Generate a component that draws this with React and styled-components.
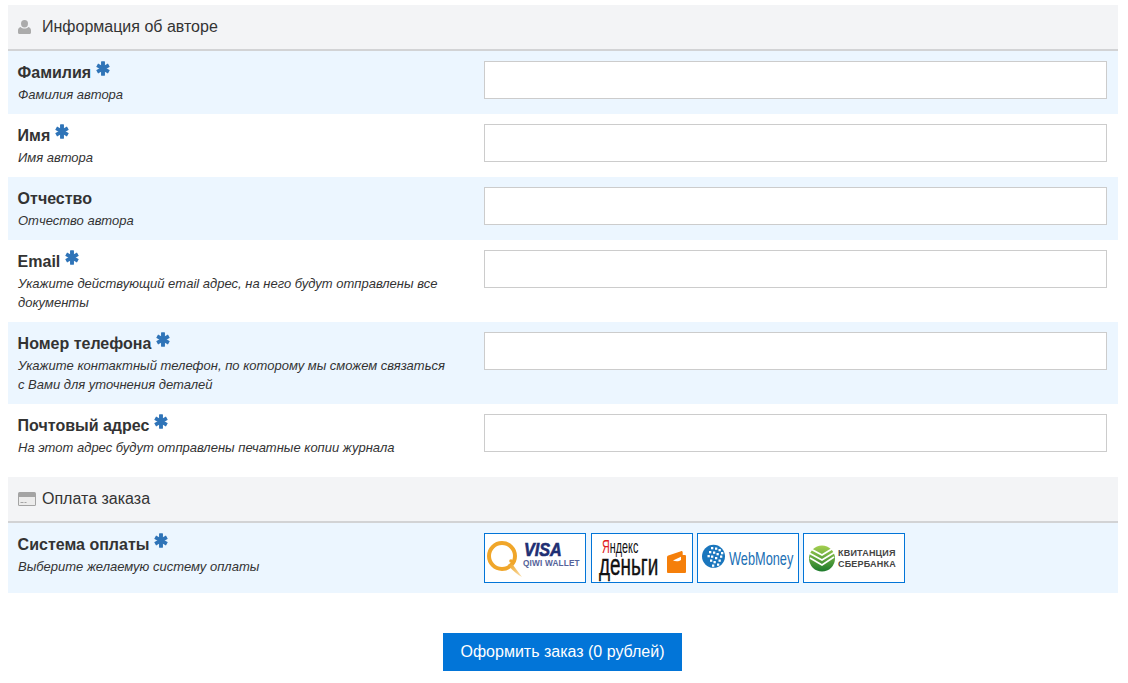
import React from 'react';
import styled, { createGlobalStyle } from 'styled-components';

const GlobalStyle = createGlobalStyle`
  html, body {
    margin: 0;
    padding: 0;
    background: #fff;
    font-family: "Liberation Sans", Arial, sans-serif;
    color: #333;
  }
`;

const Page = styled.form`
  padding: 5px 10px 12px 8px;
  display: flex;
  flex-direction: column;
`;

const SectionHeader = styled.div`
  display: flex;
  align-items: center;
  gap: ${(p) => p.$gap}px;
  height: 44px;
  padding: 0 10px;
  background: #f3f4f6;
  border-bottom: 2px solid #d2d3d5;
  font-size: 16px;
  color: #333;
  margin-top: ${(p) => p.$top || 0}px;
`;

const Row = styled.div`
  display: grid;
  grid-template-columns: 466px 1fr;
  padding: 10px;
  align-items: start;
  background: ${(p) => (p.$tinted ? '#ecf6ff' : '#fff')};
`;

const LabelCol = styled.div`
  display: flex;
  flex-direction: column;
`;

const Label = styled.label`
  display: flex;
  align-items: flex-start;
  gap: 5px;
  height: 22px;
  line-height: 22px;
  font-size: 16px;
  font-weight: 700;
  color: #333;
  margin: 1px 0 1px -0.4px;
`;

const Hint = styled.div`
  max-width: 432px;
  font-size: 13px;
  line-height: 19px;
  font-style: italic;
  color: #333;
`;

const Input = styled.input`
  display: block;
  box-sizing: border-box;
  width: 623px;
  height: 38px;
  margin: 0;
  border: 1px solid #ccc;
  background: #fff;
`;

const Star = styled.svg`
  width: 14px;
  height: 15px;
  margin-top: -1px;
  fill: #2f74b8;
`;

const HeaderIcon = styled.svg`
  display: block;
  flex: none;
  margin-left: -0.5px;
  fill: #ababab;
`;

const Systems = styled.div`
  display: flex;
  gap: 4px;
  & > button:first-child {
    margin-right: 1px;
  }
`;

const SystemButton = styled.button`
  box-sizing: border-box;
  width: 102px;
  height: 50px;
  padding: 0;
  border: 1px solid #0275d8;
  background: #fff;
  cursor: pointer;
  & > svg {
    display: block;
    width: 100px;
    height: 48px;
  }
`;

const Actions = styled.div`
  display: flex;
  justify-content: center;
  margin-top: 40px;
  padding-right: 2px;
`;

const Submit = styled.button`
  width: 239px;
  height: 38px;
  border: 0;
  padding: 0 0 0 1px;
  background: #0275d8;
  color: #fff;
  font-family: inherit;
  font-size: 16px;
  cursor: pointer;
`;

// logo lettering, squeezed sideways to the width of the wordmark
const LogoText = ({ x, y, sx = 1, children, ...rest }) => (
  <text transform={`translate(${x} ${y}) scale(${sx} 1)`} fontFamily="Liberation Sans" {...rest}>
    {children}
  </text>
);

const Required = () => (
  <Star viewBox="0 0 14 15" aria-hidden="true">
    <rect x="5.050" y="0.300" width="3.900" height="14.400" rx="0.400" />
    <rect x="5.050" y="0.750" width="3.900" height="13.500" rx="0.400" transform="rotate(60 7 7.500)" />
    <rect x="5.050" y="0.750" width="3.900" height="13.500" rx="0.400" transform="rotate(-60 7 7.500)" />
  </Star>
);

const UserIcon = () => (
  <HeaderIcon width="13" height="14" viewBox="0 0 13 14" aria-hidden="true">
    <ellipse cx="6.500" cy="3.700" rx="3.500" ry="3.700" />
    <path d="M1.200 14C.5 14 0 13.500 0 12.800V10.500C0 8.600 1 7.300 2.600 7c1 1 2.400 1.500 3.900 1.500S9.400 8 10.400 7c1.600.3 2.600 1.600 2.600 3.500v2.300c0 .7-.5 1.200-1.200 1.200z" />
  </HeaderIcon>
);

const CardIcon = () => (
  <HeaderIcon width="18" height="14" viewBox="0 0 18 14" aria-hidden="true">
    <rect x="0" y="0" width="18" height="14" rx="1.500" fill="#a4a4a4" />
    <rect x="1" y="5" width="16" height="8" fill="#ececec" />
    <rect x="2.500" y="10" width="3" height="1" fill="#a4a4a4" />
    <rect x="6.500" y="10" width="2" height="1" fill="#a4a4a4" />
  </HeaderIcon>
);

const QiwiLogo = () => (
  <svg viewBox="0 0 100 48" aria-hidden="true">
    <defs>
      <linearGradient id="qiwiTail" x1="0" y1="0" x2="1" y2="1">
        <stop offset="0" stopColor="#efa21f" />
        <stop offset="1" stopColor="#f9e0b0" />
      </linearGradient>
    </defs>
    <circle cx="17" cy="22" r="13" fill="none" stroke="#f0a62a" strokeWidth="4" />
    <path d="M23 31c2-2 3-2 5 0 3 4 6 8 9 12-4-2-9-6-14-12z" fill="url(#qiwiTail)" />
    <circle cx="26" cy="27" r="1.800" fill="#f0a62a" />
    <LogoText x={39} y={21.700} sx={0.900} fontSize="18" fontWeight="700" fontStyle="italic" stroke="#1f2f73" strokeWidth="0.600" fill="#1f2f73">VISA</LogoText>
    <LogoText x={38} y={32} sx={0.860} fontSize="9.600" fontWeight="700" letterSpacing="0.200" fill="#56639a">QIWI WALLET</LogoText>
  </svg>
);

const YandexLogo = () => (
  <svg viewBox="0 0 100 48" aria-hidden="true">
    <LogoText x={10} y={19} sx={0.600} fontSize="18" fill="#111">
      <tspan fill="#e02020">Я</tspan>ндекс
    </LogoText>
    <LogoText x={7} y={41} sx={0.630} fontSize="30" fill="#111" stroke="#111" strokeWidth="0.400">деньги</LogoText>
    <path d="M75 23.500c0-1 .5-1.600 1.300-2L89 17.200c1-.3 1.700.3 1.700 1.300V21h2c.8 0 1.300.5 1.300 1.300v15.400c0 .8-.5 1.300-1.300 1.300H76.300c-.8 0-1.300-.5-1.300-1.300z" fill="#f57f0a" />
    <path d="M81 26.500l8-3.800v3.300c-2 1.500-5 1.800-8 .5z" fill="#fff" />
  </svg>
);

const webMoneyDots = [
  [13, 13], [17, 13.500], [20.500, 15], [23, 18],
  [11, 17], [15, 17.500], [18.500, 19], [22, 21.500],
  [9.500, 21], [13, 21.500], [17, 23], [20.500, 25.500],
  [12, 25.500], [15.500, 27], [19, 29.500], [14, 30.500],
];

const WebMoneyLogo = () => (
  <svg viewBox="0 0 100 48" aria-hidden="true">
    <circle cx="15.500" cy="22.300" r="11.500" fill="#1a76bd" />
    <g fill="#fff">
      {webMoneyDots.map(([x, y]) => (
        <rect key={`${x}-${y}`} x={x} y={y} width="2.300" height="2.300" />
      ))}
    </g>
    <LogoText x={31} y={31} sx={0.710} fontSize="18" fill="#1a6fb5">WebMoney</LogoText>
  </svg>
);

const SberLogo = () => (
  <svg viewBox="0 0 100 48" aria-hidden="true">
    <defs>
      <linearGradient id="sber" x1="0" y1="0" x2="0" y2="1">
        <stop offset="0" stopColor="#a6d050" />
        <stop offset="1" stopColor="#1c7a2c" />
      </linearGradient>
    </defs>
    <circle cx="18" cy="24.500" r="13" fill="url(#sber)" />
    <path d="M5 14l13 7 13-8M5 19l13 7 13-8M6 24l12 7 12-8" fill="none" stroke="#fff" strokeWidth="1.700" />
    <LogoText x={34} y={21.700} fontSize="9" fontWeight="700" letterSpacing="0.200" fill="#444">КВИТАНЦИЯ</LogoText>
    <LogoText x={34} y={33.300} fontSize="9" fontWeight="700" letterSpacing="0.200" fill="#444">СБЕРБАНКА</LogoText>
  </svg>
);

const fields = [
  { label: 'Фамилия', hint: 'Фамилия автора', required: true },
  { label: 'Имя', hint: 'Имя автора', required: true },
  { label: 'Отчество', hint: 'Отчество автора' },
  { label: 'Email', hint: 'Укажите действующий email адрес, на него будут отправлены все документы', required: true },
  { label: 'Номер телефона', hint: 'Укажите контактный телефон, по которому мы сможем связаться с Вами для уточнения деталей', required: true },
  { label: 'Почтовый адрес', hint: 'На этот адрес будут отправлены печатные копии журнала', required: true },
];

export default function App() {
  return (
    <>
      <GlobalStyle />
      <Page onSubmit={(e) => e.preventDefault()}>
        <SectionHeader $gap={11.500}>
          <UserIcon />
          Информация об авторе
        </SectionHeader>
        {fields.map((f, i) => (
          <Row key={f.label} $tinted={i % 2 === 0}>
            <LabelCol>
              <Label>
                {f.label}
                {f.required && <Required />}
              </Label>
              <Hint>{f.hint}</Hint>
            </LabelCol>
            <Input type="text" />
          </Row>
        ))}
        <SectionHeader $top={10} $gap={6.500}>
          <CardIcon />
          Оплата заказа
        </SectionHeader>
        <Row $tinted>
          <LabelCol>
            <Label>
              Система оплаты
              <Required />
            </Label>
            <Hint>Выберите желаемую систему оплаты</Hint>
          </LabelCol>
          <Systems>
            <SystemButton type="button"><QiwiLogo /></SystemButton>
            <SystemButton type="button"><YandexLogo /></SystemButton>
            <SystemButton type="button"><WebMoneyLogo /></SystemButton>
            <SystemButton type="button"><SberLogo /></SystemButton>
          </Systems>
        </Row>
        <Actions>
          <Submit type="submit">Оформить заказ (0 рублей)</Submit>
        </Actions>
      </Page>
    </>
  );
}
